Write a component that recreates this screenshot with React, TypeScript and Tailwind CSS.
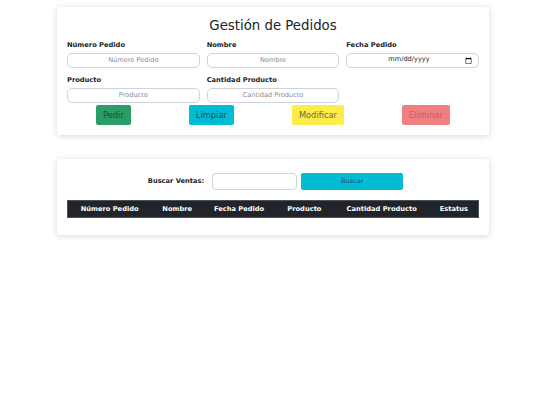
import React from "react";

const columns = [
  { label: "Número Pedido", width: "w-[84px]" },
  { label: "Nombre", width: "w-[52px]" },
  { label: "Fecha Pedido", width: "w-[72px]" },
  { label: "Producto", width: "w-[59px]" },
  { label: "Cantidad Producto", width: "w-[96px]" },
  { label: "Estatus", width: "w-[49px]" },
];

function Field({ label, placeholder, type = "text" }: { label: string; placeholder?: string; type?: string }) {
  return (
    <div className="flex flex-col">
      <label className="h-[10px] text-[6.7px] leading-[10px] font-bold text-[#212529]">{label}</label>
      <input
        type={type}
        placeholder={placeholder}
        className="mt-[3px] h-[14.5px] w-full rounded-[5px] border border-[#ced4da] bg-white px-[4px] text-center text-[6.6px] text-[#212529] outline-none placeholder:text-[#8c8c8c] [&::-webkit-datetime-edit]:pl-[37px] [&::-webkit-datetime-edit-fields-wrapper]:p-0 [&::-webkit-datetime-edit-text]:p-0 [&::-webkit-datetime-edit-month-field]:p-0 [&::-webkit-datetime-edit-day-field]:p-0 [&::-webkit-datetime-edit-year-field]:p-0"
      />
    </div>
  );
}

export default function App() {
  return (
    <div className="min-h-[405px] bg-white pl-[6px] pt-[7px] font-['DejaVu_Sans',sans-serif] text-[#212529]">
      {/* Formulario */}
      <div className="mx-auto w-[432px] rounded-[3px] bg-white px-[10px] pt-[11px] pb-[10px] shadow-[0_1px_6px_rgba(0,0,0,0.16)]">
        <h3 className="h-[16px] text-center text-[13.3px] leading-[16px] font-normal text-[#212529]">Gestión de Pedidos</h3>

        <div className="mt-[6px] grid grid-cols-3 gap-x-[7px] gap-y-[7.5px]">
          <Field label="Número Pedido" placeholder="Número Pedido" />
          <Field label="Nombre" placeholder="Nombre" />
          <Field label="Fecha Pedido" type="date" />
          <Field label="Producto" placeholder="Producto" />
          <Field label="Cantidad Producto" placeholder="Cantidad Producto" />
        </div>

        <div className="mt-[2.5px] flex justify-around">
          <button className="h-[20px] rounded-[2px] bg-[#2a9d68] px-[7px] text-[8.3px] text-[#1c4a33]">Pedir</button>
          <button className="h-[20px] rounded-[2px] bg-[#00bcd4] px-[7px] text-[8.3px] text-[#234a58]">Limpiar</button>
          <button className="h-[20px] rounded-[2px] bg-[#fcec4c] px-[7px] text-[8.3px] text-[#6e6a3a]">Modificar</button>
          <button className="h-[20px] rounded-[2px] bg-[#f08080] px-[7px] text-[8.3px] text-[#c35f5f]">Eliminar</button>
        </div>
      </div>

      {/* Ventas */}
      <div className="mx-auto mt-[24px] w-[432px] rounded-[3px] bg-white px-[10px] pt-[14px] pb-[17px] shadow-[0_1px_6px_rgba(0,0,0,0.16)]">
        <div className="flex items-center justify-center pl-[5px]">
          <label className="text-[6.7px] font-bold text-[#212529]">Buscar Ventas:</label>
          <input className="ml-[8px] h-[17px] w-[85px] rounded-[4px] border border-[#ced4da] bg-white px-[4px] text-[6.6px] outline-none" />
          <button className="ml-[4px] h-[17px] w-[102px] rounded-[2px] bg-[#00bcd4] text-[6.6px] text-[#24525e]">Buscar</button>
        </div>

        <table className="mt-[10px] w-full border-collapse">
          <thead>
            <tr className="h-[17px] border border-[#4b5157] bg-[#212529]">
              {columns.map((c) => (
                <th key={c.label} className={`${c.width} p-0 text-center text-[6.7px] font-bold text-white`}>
                  {c.label}
                </th>
              ))}
            </tr>
          </thead>
        </table>
      </div>
    </div>
  );
}
